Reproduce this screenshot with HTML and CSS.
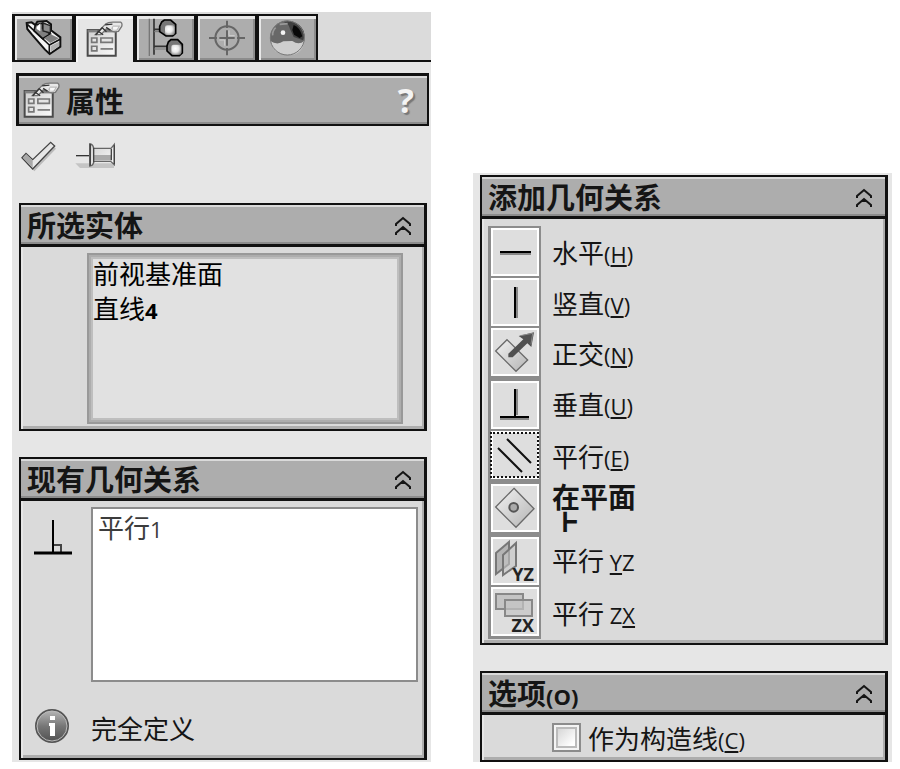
FILE: index.html
```
<!DOCTYPE html>
<html lang="zh-CN">
<head>
    <meta charset="UTF-8">
    <meta name="viewport" content="width=device-width, initial-scale=1.0">
    <title>属性</title>
    <link rel="stylesheet" href="styles.css">
</head>
<body>
    <!-- shared icons -->
    <svg class="defs" width="0" height="0" aria-hidden="true">
        <defs>
            <linearGradient id="silver" x1="0" y1="0" x2="1" y2="1">
                <stop offset="0" stop-color="#d0d0d0"/>
                <stop offset="1" stop-color="#fafafa"/>
            </linearGradient>
            <linearGradient id="plane" x1="0" y1="0" x2="1" y2="1">
                <stop offset="0" stop-color="#f2f2f2"/>
                <stop offset="1" stop-color="#b4b4b4"/>
            </linearGradient>
            <linearGradient id="dark" x1="0" y1="0" x2="0" y2="1">
                <stop offset="0" stop-color="#b8b8b8"/>
                <stop offset="0.5" stop-color="#777"/>
                <stop offset="1" stop-color="#505050"/>
            </linearGradient>
            <radialGradient id="knob" cx="0.4" cy="0.4" r="0.7">
                <stop offset="0" stop-color="#fff"/>
                <stop offset="0.5" stop-color="#e8e8e8"/>
                <stop offset="1" stop-color="#888"/>
            </radialGradient>
        </defs>
        <symbol id="icon-props" viewBox="258 64 112 114">
            <path d="M263 94H348V172H263Z" fill="url(#silver)" stroke="#4a4a4a" stroke-width="6"/>
            <path d="M263 97H348" stroke="#808080" stroke-width="8"/>
            <path d="M275 118H291V131H275ZM303 118H338V131H303ZM275 143H291V157H275Z" fill="#e4e4e4" stroke="#777" stroke-width="5"/>
            <path d="M302 151H340" stroke="#777" stroke-width="5"/>
            <path d="M286 108L317 76Q325 70 339 70H363Q369 73 366 83L356 98Q340 102 332 94L319 91L303 108Z" fill="#e8e8e8" stroke="#777" stroke-width="4"/>
            <path d="M287 109L307 87L320 99M293 96L310 108M316 78L338 76M319 86L332 94" fill="none" stroke="#333" stroke-width="4"/>
            <path d="M340 80H362L353 96Q340 98 334 89Z" fill="#bbb"/>
            <path d="M340 84H356L350 93H340Z" fill="#f8f8f8"/>
        </symbol>
        <symbol id="icon-fold" viewBox="0 0 16 20">
            <path d="M1 10V8L8 2L15 8V10M1 19V17L8 11L15 17V19" fill="none" stroke="#151515" stroke-width="2"/>
            <path d="M5 14L8 11L11 14Z" fill="#151515"/>
        </symbol>
    </svg>

    <main class="page">
        <section class="panel">
            <nav class="tab-bar">
                <div class="tabs">
                    <button class="tab" type="button" aria-label="特征">
                        <svg width="38" height="38" viewBox="72 60 114 114">
                            <path d="M77 72L92 70L103 78L109 68L137 66L150 76V94L178 115V143L146 165L132 152L93 107L79 90Z" fill="#f4f4f4" stroke="#111" stroke-width="6"/>
                            <path d="M79 76L145 138V164M145 138L179 120" fill="none" stroke="#111" stroke-width="5"/>
                            <path d="M103 78L99 95L125 119L148 105L125 89L125 72Z" fill="#808080" stroke="#111" stroke-width="5"/>
                            <path d="M107 84L118 73V97L107 90Z" fill="#fff"/>
                            <path d="M126 72L148 80V102L126 96Z" fill="#8c8c8c" stroke="#222" stroke-width="4"/>
                            <path d="M129 118L149 106L174 118L148 132Z" fill="#808080"/>
                            <path d="M150 140L174 128V142L150 158Z" fill="#b0b0b0"/>
                        </svg>
                    </button>
                    <button class="tab active" type="button" aria-label="属性">
                        <svg width="37" height="38"><use href="#icon-props"/></svg>
                    </button>
                    <button class="tab" type="button" aria-label="配置">
                        <svg width="38" height="40" viewBox="440 58 114 120">
                            <path d="M447 60V172" stroke="#777" stroke-width="4"/>
                            <path d="M461 60V168M461 92H484M461 143H504" stroke="#333" stroke-width="5" fill="none"/>
                            <path d="M461 99H480M461 151H499" stroke="#777" stroke-width="3"/>
                            <path d="M484 70L492 64H511L526 77V104L517 112H497L478 99V83Z" fill="#777" stroke="#000" stroke-width="5"/>
                            <rect x="494" y="80" width="29" height="29" rx="6" fill="url(#knob)"/>
                            <path d="M504 130L512 123H532L546 137V163L537 171H515L500 157V142Z" fill="#777" stroke="#000" stroke-width="5"/>
                            <rect x="513" y="138" width="30" height="30" rx="6" fill="url(#knob)"/>
                        </svg>
                    </button>
                    <button class="tab" type="button" aria-label="尺寸">
                        <svg width="38" height="38" viewBox="625 58 114 114">
                            <g fill="none" stroke="#666" stroke-width="6">
                                <circle cx="682" cy="115" r="35"/>
                                <path d="M682 63V85M682 92V138M682 145V167M628 115H652M659 115H705M712 115H736"/>
                            </g>
                            <path d="M688 92V108H705M659 121H675V138" fill="none" stroke="#d0d0d0" stroke-width="3"/>
                        </svg>
                    </button>
                    <button class="tab" type="button" aria-label="外观">
                        <svg width="37" height="38" viewBox="810 58 111 114">
                            <circle cx="865" cy="115" r="52" fill="#686868"/>
                            <path d="M814 124Q835 138 853 125L880 124Q900 138 916 123Q911 166 865 167Q820 164 814 124Z" fill="#cecece"/>
                            <path d="M847 64Q872 72 873 88L884 112L913 122Q921 100 908 84Q892 64 865 63Z" fill="#404040"/>
                            <path d="M884 76Q902 82 910 110L902 115L885 105L880 91Z" fill="#080808"/>
                            <path d="M830 84Q820 94 821 107M842 74L866 72" stroke="#999" stroke-width="5" fill="none"/>
                            <circle cx="852" cy="99" r="7" fill="#f4f4f4"/>
                            <circle cx="865" cy="115" r="51" fill="none" stroke="#777" stroke-width="3"/>
                        </svg>
                    </button>
                </div>
            </nav>

            <header class="title-bar">
                <svg width="37" height="38"><use href="#icon-props"/></svg>
                <h1>属性</h1>
                <button class="help" type="button" aria-label="帮助">?</button>
            </header>

            <div class="actions">
                <button type="button" aria-label="确定">
                    <svg width="40" height="32" viewBox="60 420 120 96">
                        <path d="M70 478L79 471L99 493L157 435L168 446L103 514Z" fill="#bbb"/>
                        <path d="M66 473L78 460L98 479L152 427L164 438L98 507Z" fill="url(#silver)" stroke="#444" stroke-width="4"/>
                        <path d="M68 473L79 463L98 482V503Z" fill="#a8a8a8"/>
                    </svg>
                </button>
                <button type="button" aria-label="保持可见">
                    <svg width="42" height="32" viewBox="222 420 126 96">
                        <path d="M226 490H342V504H240Z" fill="#c4c4c4"/>
                        <path d="M228 467H268" stroke="#333" stroke-width="4"/>
                        <path d="M269 432Q279 432 281 445H333L343 433V494L332 484H282Q279 498 269 498Z" fill="url(#silver)" stroke="#666" stroke-width="4"/>
                        <path d="M282 465H333V481H282Z" fill="#aaa"/>
                        <path d="M271 431V497M281 443V487M334 447V481M343 436V492" stroke="#444" stroke-width="4"/>
                    </svg>
                </button>
            </div>

            <section class="box">
                <header class="box-header">
                    <h2>所选实体</h2>
                    <button class="fold" type="button" aria-label="折叠"><svg width="16" height="20"><use href="#icon-fold"/></svg></button>
                </header>
                <div class="box-body selected">
                    <ul class="entities">
                        <li>前视基准面</li>
                        <li>直线<b class="latin">4</b></li>
                    </ul>
                </div>
            </section>

            <section class="box">
                <header class="box-header">
                    <h2>现有几何关系</h2>
                    <button class="fold" type="button" aria-label="折叠"><svg width="16" height="20"><use href="#icon-fold"/></svg></button>
                </header>
                <div class="box-body existing">
                    <svg class="perp" width="38" height="38" viewBox="0 0 38 38">
                        <path d="M19 1V34" stroke="#000" stroke-width="2"/>
                        <path d="M20 26H27V34" fill="none" stroke="#444" stroke-width="2"/>
                        <path d="M0 34H38" stroke="#000" stroke-width="3"/>
                    </svg>
                    <ul class="relations">
                        <li>平行<span class="latin">1</span></li>
                    </ul>
                    <svg class="info" width="36" height="36" viewBox="0 0 36 36">
                        <circle cx="18" cy="18" r="16" fill="url(#dark)" stroke="#555" stroke-width="2"/>
                        <circle cx="18" cy="18" r="15" fill="none" stroke="#bbb" stroke-width="1"/>
                        <path d="M16 8H21V12H16ZM15 15H21V28H16V18H15Z" fill="#fff"/>
                    </svg>
                    <p class="status">完全定义</p>
                </div>
            </section>
        </section>

        <section class="panel side">
            <section class="box">
                <header class="box-header">
                    <h2>添加几何关系</h2>
                    <button class="fold" type="button" aria-label="折叠"><svg width="16" height="20"><use href="#icon-fold"/></svg></button>
                </header>
                <div class="box-body add">
                    <div class="row">
                        <button class="tool first" id="rel-h" type="button">
                            <svg width="44" height="44" viewBox="0 0 44 44"><path d="M7 24H38" stroke="#888" stroke-width="2"/><path d="M7 22H38" stroke="#000" stroke-width="2"/></svg>
                        </button>
                        <label for="rel-h">水平<span class="latin">(<u>H</u>)</span></label>
                    </div>
                    <div class="row">
                        <button class="tool" id="rel-v" type="button">
                            <svg width="44" height="44" viewBox="0 0 44 44"><path d="M24 7V38" stroke="#888" stroke-width="2"/><path d="M22 7V38" stroke="#000" stroke-width="2"/></svg>
                        </button>
                        <label for="rel-v">竖直<span class="latin">(<u>V</u>)</span></label>
                    </div>
                    <div class="row">
                        <button class="tool" id="rel-n" type="button">
                            <svg width="44" height="44" viewBox="84 507 132 132">
                                <path d="M92 570L126 536L188 597L153 631Z" fill="url(#plane)" stroke="#6a6a6a" stroke-width="4"/>
                                <path d="M130 578L175 535L161 525L207 514L199 558L187 547L143 589H130Z" fill="#505050"/>
                                <path d="M166 524L203 517L198 550" fill="none" stroke="#888" stroke-width="3"/>
                            </svg>
                        </button>
                        <label for="rel-n">正交<span class="latin">(<u>N</u>)</span></label>
                    </div>
                    <div class="row">
                        <button class="tool spaced" id="rel-u" type="button">
                            <svg width="44" height="44" viewBox="0 0 44 44"><path d="M24 6V32M7 36H36" stroke="#888" stroke-width="2"/><path d="M22 6V34M7 34H36" stroke="#000" stroke-width="2"/></svg>
                        </button>
                        <label for="rel-u">垂直<span class="latin">(<u>U</u>)</span></label>
                    </div>
                    <div class="row">
                        <button class="tool focused" id="rel-e" type="button">
                            <svg width="44" height="44" viewBox="0 0 44 44"><path d="M5 15L29 39M14 6L38 30" stroke="#111" stroke-width="2"/></svg>
                        </button>
                        <label for="rel-e">平行<span class="latin">(<u>E</u>)</span></label>
                    </div>
                    <div class="row">
                        <button class="tool spaced" id="rel-on" type="button">
                            <svg width="44" height="44" viewBox="84 345 132 132">
                                <path d="M147 352L207 413L153 469L92 408Z" fill="url(#plane)" stroke="#6a6a6a" stroke-width="4"/>
                                <circle cx="146" cy="409" r="13" fill="#aaa" stroke="#555" stroke-width="6"/>
                            </svg>
                        </button>
                        <label class="wrapped" for="rel-on">在平面<span class="cut">上</span></label>
                    </div>
                    <div class="row">
                        <button class="tool spaced" id="rel-yz" type="button">
                            <svg width="44" height="44" viewBox="0 0 44 44">
                                <path d="M3 14L16 3V25L3 35Z" fill="#b4b4b4" stroke="#777" stroke-width="2"/>
                                <path d="M10 16L23 4V27L10 36Z" fill="#c4c4c4" fill-opacity="0.6" stroke="#777" stroke-width="2"/>
                                <text class="axis" x="41" y="42" text-anchor="end">YZ</text>
                            </svg>
                        </button>
                        <label for="rel-yz">平行<span class="latin"> <u>Y</u>Z</span></label>
                    </div>
                    <div class="row">
                        <button class="tool" id="rel-zx" type="button">
                            <svg width="44" height="44" viewBox="0 0 44 44">
                                <path d="M3 4H30V19H3Z" fill="#c4c4c4" stroke="#888" stroke-width="2"/>
                                <path d="M12 10H39V26H12Z" fill="#c4c4c4" fill-opacity="0.7" stroke="#888" stroke-width="2"/>
                                <text class="axis" x="41" y="42" text-anchor="end">ZX</text>
                            </svg>
                        </button>
                        <label for="rel-zx">平行<span class="latin"> Z<u>X</u></span></label>
                    </div>
                </div>
            </section>

            <section class="box">
                <header class="box-header">
                    <h2>选项<span class="latin">(O)</span></h2>
                    <button class="fold" type="button" aria-label="折叠"><svg width="16" height="20"><use href="#icon-fold"/></svg></button>
                </header>
                <div class="box-body options">
                    <input type="checkbox" id="construction">
                    <label for="construction">作为构造线<span class="latin">(<u>C</u>)</span></label>
                </div>
            </section>
        </section>
    </main>
</body>
</html>
```
FILE: styles.css
```
* {
    box-sizing: border-box;
}

body {
    margin: 0;
    background: #fff;
    color: #151515;
    font-family: "Noto Sans CJK SC", sans-serif;
    font-size: 26px;
    line-height: 35px;
}

h1, h2, ul, p {
    margin: 0;
    padding: 0;
}

h1, h2 {
    font-size: 29px;
    font-weight: bold;
    line-height: 36px;
}

ul {
    list-style: none;
}

button {
    margin: 0;
    padding: 0;
    border: none;
    background: none;
    color: inherit;
    font-family: inherit;
    cursor: pointer;
}

svg {
    display: block;
}

.defs {
    position: absolute;
}

.latin {
    font-family: "Open Sans", sans-serif;
    font-size: 22px;
    line-height: 22px;
    white-space: pre;
}

u {
    text-decoration-thickness: 2px;
    text-underline-offset: 2px;
}

.page {
    display: grid;
    grid-template-columns: 1fr 1fr;
    gap: 42px;
    align-items: end;
    padding: 12px 8px 7px 12px;
}

.panel {
    background: #e6e6e6;
    padding-bottom: 2px;
}

.panel.side {
    padding: 2px 0 0;
}

/* tabs */
.tab-bar {
    padding-top: 2px;
    background: #dbdbdb;
    box-shadow: inset 0 -2px #111;
}

.tabs {
    display: inline-flex;
    gap: 4px;
    padding: 2px 2px 0 3px;
    background: #111;
    vertical-align: top;
}

.tab {
    display: flex;
    justify-content: center;
    align-items: center;
    width: 57px;
    height: 44px;
    margin-bottom: 2px;
    background: #adadad;
    box-shadow: inset 2px 3px #e8e8e8, inset -2px -2px #8c8c8c;
}

.tab.active {
    height: 46px;
    margin-bottom: 0;
    background: #e6e6e6;
    box-shadow: inset 2px 3px #f6f6f6;
}

/* title */
.title-bar {
    display: flex;
    align-items: center;
    gap: 6px;
    margin: 11px 2px 0 4px;
    padding: 5px 13px 5px 4px;
    border: 2px solid #111;
    border-width: 3px 2px 2px 3px;
    background: #adadad;
    box-shadow: inset 0 2px #dadada, inset 0 -2px #8c8c8c;
}

.help {
    margin-left: auto;
    color: #f4f4f4;
    font-family: "Open Sans", sans-serif;
    font-size: 34px;
    font-weight: bold;
    line-height: 38px;
    text-shadow: 2px 2px 1px #777;
}

.actions {
    display: flex;
    gap: 14px;
    padding: 14px 8px 31px;
}

/* boxes */
.box {
    margin: 0 4px 0 7px;
    border: 2px solid #111;
    border-right-width: 3px;
    background: #dadada;
}

.box + .box {
    margin-top: 26px;
}

.box-header {
    display: flex;
    justify-content: space-between;
    align-items: center;
    padding: 1px 13px 2px 6px;
    border-bottom: 3px solid #111;
    background: #adadad;
    box-shadow: inset 0 2px #dadada, inset 0 -2px #8c8c8c;
}

.fold {
    padding-top: 4px;
}

.box-body {
    box-shadow: inset 2px 0 #e6e6e6, inset -2px -3px #adadad;
}

.selected {
    padding: 6px 21px 5px 66px;
}

.entities {
    min-height: 171px;
    padding: 0 4px;
    border: 2px solid #999;
    background: #e1e1e1;
    color: #000;
    box-shadow: inset 0 0 0 2px #adadad, inset 0 0 0 4px #bebebe;
}

.existing {
    display: grid;
    grid-template-columns: 38px 1fr;
    column-gap: 19px;
    row-gap: 26px;
    padding: 6px 6px 13px 13px;
}

.perp {
    margin-top: 12px;
}

.relations {
    min-height: 175px;
    padding: 0 5px;
    border: 2px solid #8c8c8c;
    background: #fff;
    color: #3c3c3c;
}

.status {
    padding-top: 2px;
}

/* relation buttons */
.add {
    padding: 7px 6px 4px;
}

.row {
    display: flex;
    align-items: center;
    gap: 11px;
}

.tool {
    display: flex;
    justify-content: center;
    align-items: center;
    flex: none;
    width: 53px;
    height: 50px;
    border: solid #8c8c8c;
    border-width: 1px 2px 1px 3px;
    background: #dedede;
    box-shadow: inset 0 0 0 2px #fff;
}

.tool svg {
    overflow: visible;
}

.tool.first {
    height: 51px;
    border-top-width: 2px;
}

.tool.spaced {
    height: 53px;
    border-top-width: 4px;
}

.row:last-child .tool {
    height: 53px;
    border-bottom-width: 3px;
}

.tool.focused {
    outline: 2px dotted #111;
    outline-offset: -4px;
}

.axis {
    font-family: "Open Sans", sans-serif;
    font-size: 18px;
    font-weight: bold;
    fill: #222;
}

.wrapped {
    font-size: 28px;
    font-weight: bold;
    line-height: 28px;
}

.cut {
    display: block;
    height: 22px;
    overflow: hidden;
}

/* options */
.options {
    display: flex;
    align-items: center;
    gap: 7px;
    padding: 5px 6px 5px 70px;
}

.options input {
    appearance: none;
    width: 29px;
    height: 29px;
    margin: 0;
    border: 2px solid #8c8c8c;
    background: linear-gradient(135deg, #ccc, #fff 75%);
    box-shadow: inset 0 0 0 2px #f4f4f4, inset 0 0 0 4px #bbb;
}
```
